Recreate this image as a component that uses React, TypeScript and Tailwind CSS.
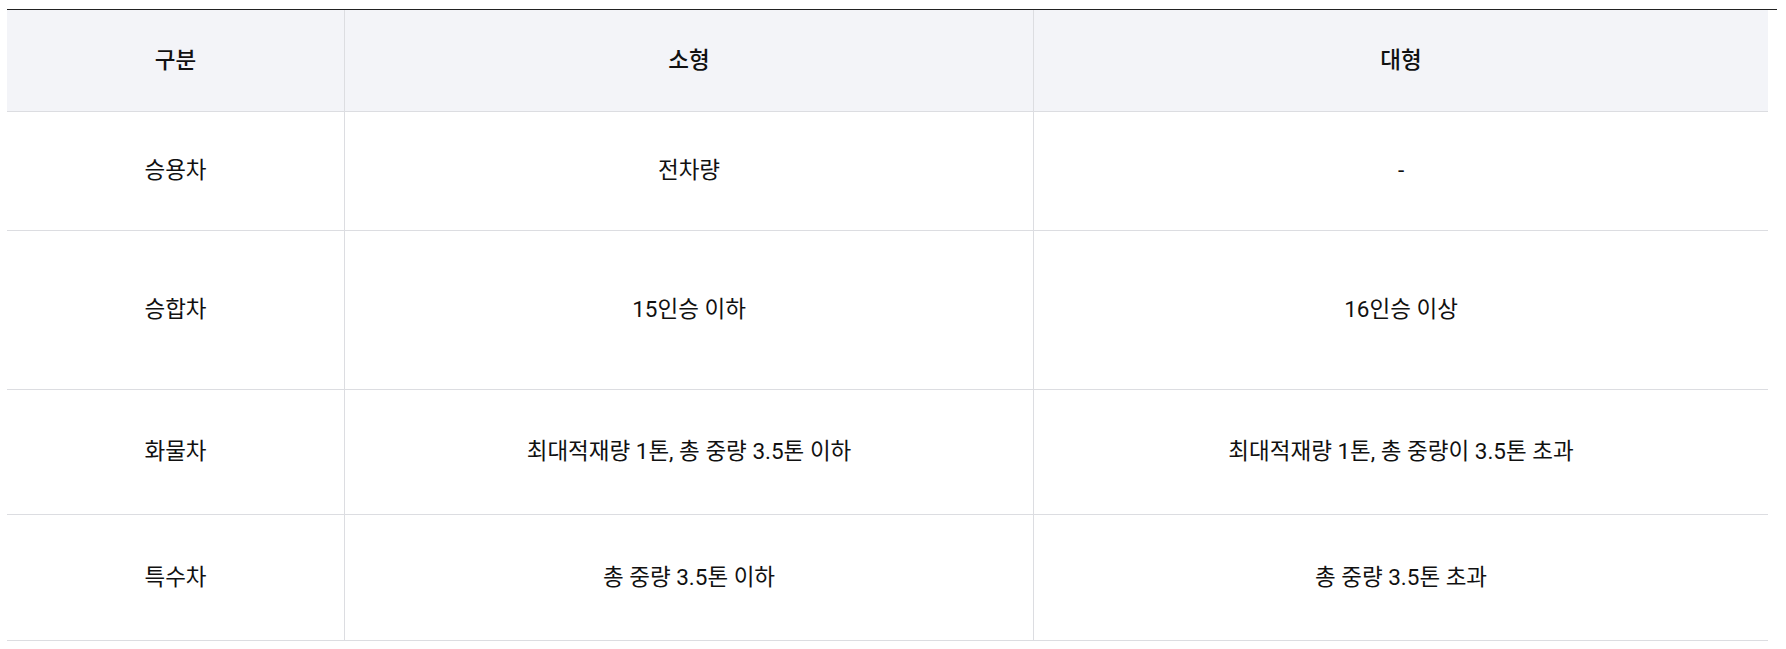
const rows = [
  { name: "승용차", small: "전차량", large: "-", h: "h-[119px]" },
  { name: "승합차", small: "15인승 이하", large: "16인승 이상", h: "h-[159px]" },
  { name: "화물차", small: "최대적재량 1톤, 총 중량 3.5톤 이하", large: "최대적재량 1톤, 총 중량이 3.5톤 초과", h: "h-[125px]" },
  { name: "특수차", small: "총 중량 3.5톤 이하", large: "총 중량 3.5톤 초과", h: "h-[126px]" },
]

export default function App() {
  return (
    <div
      className="min-h-screen bg-white pt-[9px] pl-[7px] text-[#111]"
      style={{ fontFamily: 'Roboto, "Noto Sans CJK KR", sans-serif' }}
    >
      <div className="w-[1770px] border-t border-[#222]">
        <div className="w-[1761px]">
          {/* header */}
          <div className="grid grid-cols-[338px_689px_734px] h-[102px] bg-[#f3f4f8] border-b border-[#dcdde1] text-[22.5px] font-medium">
            <div className="flex items-center justify-center border-r border-[#dcdde1]">구분</div>
            <div className="flex items-center justify-center border-r border-[#dcdde1]">소형</div>
            <div className="flex items-center justify-center">대형</div>
          </div>

          {rows.map((row) => (
            <div
              key={row.name}
              className={`grid grid-cols-[338px_689px_734px] border-b border-[#dcdde1] text-[22.5px] ${row.h}`}
            >
              <div className="flex items-center justify-center border-r border-[#dcdde1]">{row.name}</div>
              <div className="flex items-center justify-center border-r border-[#dcdde1]">{row.small}</div>
              <div className="flex items-center justify-center">{row.large}</div>
            </div>
          ))}
        </div>
      </div>
    </div>
  )
}
